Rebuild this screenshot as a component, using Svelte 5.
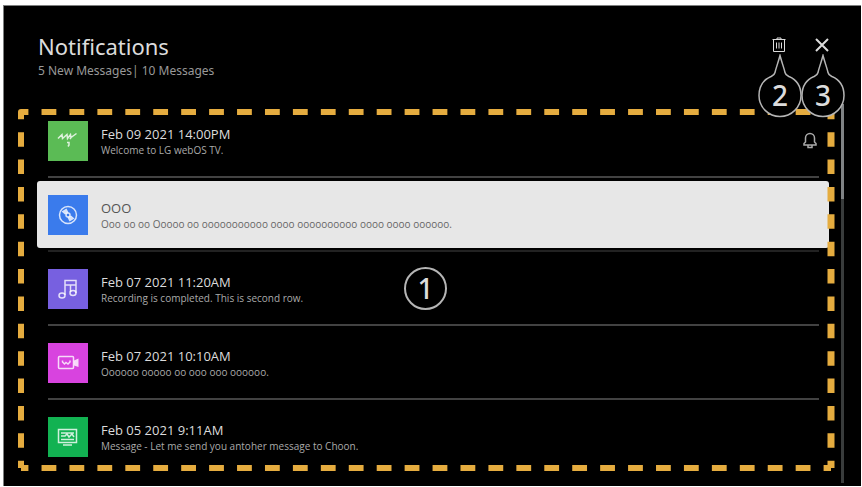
<script>
  const messages = [
    { icon: 'my', color: '#5bbb55', title: 'Feb 09 2021 14:00PM', text: 'Welcome to LG webOS TV.', bell: true },
    { icon: 'disc', color: '#3a7bec', title: 'OOO', text: 'Ooo oo oo Ooooo oo ooooooooooo oooo oooooooooo oooo oooo oooooo.', selected: true },
    { icon: 'music', color: '#7760e0', title: 'Feb 07 2021 11:20AM', text: 'Recording is completed. This is second row.' },
    { icon: 'camera', color: '#d843df', title: 'Feb 07 2021 10:10AM', text: 'Oooooo ooooo oo ooo ooo oooooo.' },
    { icon: 'screen', color: '#12b252', title: 'Feb 05 2021 9:11AM', text: 'Message - Let me send you antoher message to Choon.' }
  ];
</script>

{#snippet pin(number)}
  <span class="pin">
    <svg width="46" height="66" viewBox="0 0 46 66" aria-hidden="true">
      <path d="M23 1.500C21 9 19 14 18 18.500C17.500 21 16 21.500 14 22.500C7 25.500 2 32 2 41.500A21 21 0 0 0 44 41.500C44 32 39 25.500 32 22.500C30 21.500 28.500 21 28 18.500C27 14 25 9 23 1.500Z" />
    </svg>
    <span class="number">{number}</span>
  </span>
{/snippet}

<main class="screen">
  <header>
    <div class="heading">
      <h1>Notifications</h1>
      <p>5 New Messages| 10 Messages</p>
    </div>
    <div class="actions">
      <div class="action">
        <button aria-label="Delete messages">
          <svg width="14" height="16" viewBox="0 0 14 16"><path d="M0.500 2.500H13.500M5 2.500V1H9V2.500M1.500 2.500V14.500H12.500V2.500M4.500 5.500V11.500M7 5.500V11.500M9.500 5.500V11.500" /></svg>
        </button>
        {@render pin(2)}
      </div>
      <div class="action">
        <button aria-label="Close">
          <svg class="close" width="14" height="14" viewBox="0 0 14 14"><path d="M1 1L13 13M13 1L1 13" /></svg>
        </button>
        {@render pin(3)}
      </div>
    </div>
  </header>

  <div class="body">
    <section aria-label="Messages">
      <ul>
        {#each messages as m}
          <li class:active={m.selected}>
            <button class="message">
              <span class="tile" style:background={m.color}>
                <svg width="24" height="24" viewBox="0 0 24 24" aria-hidden="true">
                  {#if m.icon === 'my'}
                    <path d="M2 9.500L6 5.500L6.500 9.500L11 5.500L11.500 9.500L14.500 5.500L15 8.500L20.500 4.500M15 8.500L14 10" />
                    <path d="M11 13.500H13V16L12 17.500" />
                  {:else if m.icon === 'disc'}
                    <circle cx="12" cy="12" r="8.500" />
                    <circle cx="12" cy="12" r="2" />
                    <path class="solid" d="M5.500 8.500L10.500 5.500L12.500 9.500L9 11.500Z M18.500 15.500L13.500 18.500L11.500 14.500L15 12.500Z" />
                  {:else if m.icon === 'music'}
                    <path d="M9 18V3.500H20V16M9 8H20M14.500 15V8" />
                    <ellipse cx="6" cy="18.500" rx="3" ry="2.500" />
                    <ellipse cx="17" cy="16" rx="3" ry="2.500" />
                  {:else if m.icon === 'camera'}
                    <rect x="2.500" y="5.500" width="15" height="12" rx="1" />
                    <path d="M6.500 9.500V11L8.500 13L10 11.500L12 13L14 11V9.500" />
                    <path class="solid" d="M18 9.500L22.500 7.500V16L18 14.500Z" />
                  {:else}
                    <rect x="2.500" y="4.500" width="18" height="13" />
                    <path d="M5 8H18M5 11H9L11 9L13 12L16 9L18 12M5 14.500H18M7 20H16" />
                  {/if}
                </svg>
              </span>
              <span class="copy">
                <span class="title">{m.title}</span>
                <span class="text">{m.text}</span>
              </span>
              {#if m.bell}
                <svg class="bell" width="14" height="17" viewBox="0 0 14 17" role="img" aria-label="Reminder">
                  <path d="M1 13V11.500L2.500 10V6A4.500 4.500 0 0 1 11.500 6V10L13 11.500V13ZM5 13.500V15.500H9V13.500" />
                </svg>
              {/if}
            </button>
          </li>
        {/each}
      </ul>

      <div class="outline" aria-hidden="true">
        <svg>
          <line x1="0" y1="0" x2="100%" y2="0" pathLength="29" />
          <line x1="0" y1="100%" x2="100%" y2="100%" pathLength="29" />
          <line x1="0" y1="0" x2="0" y2="100%" pathLength="13" />
          <line class="thick" x1="100%" y1="0" x2="100%" y2="100%" pathLength="13" />
          <circle r="3" />
        </svg>
      </div>
      <span class="badge">1</span>
    </section>
    <div class="scrollbar"><div class="thumb"></div></div>
  </div>
</main>

<style>
  :global(body) {
    background: #fff;
  }
  .screen {
    box-sizing: border-box;
    min-height: calc(100vh - 6px);
    margin: 5px 1px 0 3px;
    border: solid #7d7f7f;
    border-width: 1px 0 0 1px;
    background: #000;
    color: #dcdcdc;
    font-family: "Noto Sans", "Open Sans", sans-serif;
  }
  header {
    display: flex;
    justify-content: space-between;
    box-sizing: border-box;
    height: 98px;
    padding: 24px 27px 0 34px;
  }
  h1 {
    margin: 0;
    font-size: 22px;
    line-height: 32px;
    font-weight: 400;
  }
  p {
    margin: 0;
    font-size: 12px;
    line-height: 18px;
    color: #999;
  }
  button {
    padding: 0;
    border: 0;
    background: none;
    color: inherit;
    font: inherit;
    text-align: left;
  }
  svg {
    display: block;
    fill: none;
    stroke: currentColor;
  }
  .actions {
    display: flex;
    gap: 19px;
    padding-top: 3px;
  }
  .action {
    position: relative;
    width: 24px;
    height: 24px;
  }
  .action button {
    display: flex;
    align-items: center;
    justify-content: center;
    width: 24px;
    height: 24px;
  }
  .close {
    stroke-width: 2;
  }
  .pin {
    position: absolute;
    z-index: 2;
    top: 21px;
    left: -10px;
  }
  .pin svg {
    fill: #000;
    stroke: #b5b5b5;
    stroke-width: 1.5;
  }
  .number {
    position: absolute;
    inset: 20px 0 0;
    font-size: 28px;
    line-height: 42px;
    font-weight: 500;
    text-align: center;
  }
  .body {
    display: flex;
    gap: 7px;
    padding: 0 17px 0 14px;
  }
  section {
    position: relative;
    flex: 1;
  }
  ul {
    margin: 0 5px 0 19px;
    padding: 0 0 4px;
    list-style: none;
  }
  li {
    padding-top: 3px;
  }
  li:not(:last-child)::after {
    content: "";
    display: block;
    height: 2px;
    margin: 2px 10px 0 11px;
    background: #424242;
  }
  .active:not(:last-child)::after {
    background: #222;
  }
  .message {
    display: flex;
    align-items: center;
    gap: 13px;
    width: 100%;
    height: 67px;
    padding: 0 12px 0 11px;
    border-radius: 3px;
  }
  .active .message {
    background: #e7e7e7;
    color: #555;
  }
  .tile {
    display: grid;
    place-items: center;
    width: 40px;
    height: 40px;
    color: #fffc;
  }
  .tile svg {
    stroke-width: 1.5;
  }
  .solid {
    fill: currentColor;
    stroke: none;
  }
  .copy {
    flex: 1;
    padding-top: 3px;
  }
  .title,
  .text {
    display: block;
    font-family: "Open Sans", "Noto Sans", sans-serif;
    line-height: 16px;
  }
  .title {
    font-size: 13px;
  }
  .text {
    font-size: 10px;
    color: #aaa;
  }
  .active .text {
    color: #666;
  }
  .bell {
    color: #aaa;
    stroke-width: 1.5;
  }
  .outline {
    position: absolute;
    inset: 8px 3px 6px;
    pointer-events: none;
  }
  .outline svg {
    width: 100%;
    height: 100%;
    overflow: visible;
    stroke: #e5ac3f;
    stroke-width: 6;
    stroke-dasharray: 0.53 0.47;
    stroke-dashoffset: 0.265;
  }
  .outline .thick {
    stroke-width: 7;
  }
  .outline circle {
    fill: #e5ac3f;
    stroke: none;
  }
  .badge {
    position: absolute;
    top: 50%;
    left: 50%;
    box-sizing: border-box;
    width: 43px;
    height: 43px;
    margin: -22px;
    border: 2px solid #b5b5b5;
    border-radius: 50%;
    font-size: 28px;
    line-height: 39px;
    font-weight: 500;
    text-align: center;
  }
  .scrollbar {
    width: 3px;
    margin-bottom: -9px;
    background: #393c3c;
  }
  .thumb {
    height: 25%;
    background: #808385;
  }
</style>
